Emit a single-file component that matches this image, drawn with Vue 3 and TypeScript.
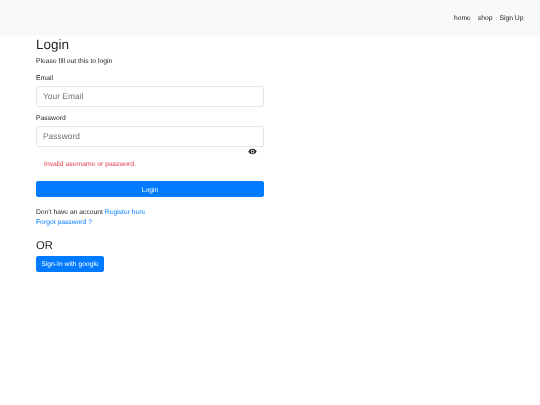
<script setup lang="ts">
const links: string[] = ['home', 'shop', 'Sign Up']
</script>

<template>
  <div class="page">
    <nav class="nav">
      <a v-for="l in links" :key="l" class="nav-link">{{ l }}</a>
    </nav>
    <main class="main">
      <h1 class="title">Login</h1>
      <p class="sub">Please fill out this to login</p>
      <label class="label">Email</label>
      <input class="input" placeholder="Your Email" />
      <label class="label second">Password</label>
      <input class="input" placeholder="Password" />
      <div class="eye-row">
        <svg class="eye" viewBox="0 0 24 24" width="9" height="9">
          <path fill="#212529" d="M12 4.5C7 4.5 2.7 7.6 1 12c1.7 4.4 6 7.5 11 7.5s9.3-3.1 11-7.5c-1.7-4.4-6-7.5-11-7.5zM12 17a5 5 0 1 1 0-10 5 5 0 0 1 0 10zm0-8a3 3 0 1 0 0 6 3 3 0 0 0 0-6z" />
        </svg>
      </div>
      <p class="error">Invalid username or password.</p>
      <button class="btn block">Login</button>
      <p class="account">Don't have an account <a class="link">Register here</a></p>
      <p class="forgot"><a class="link">Forgot password ?</a></p>
      <h2 class="or">OR</h2>
      <button class="btn google">Sign-In with google</button>
    </main>
  </div>
</template>

<style>
html, body { margin: 0; background: #fff; }
</style>

<style scoped>
.page {
  font-family: "Liberation Sans", Arial, sans-serif;
  color: #212529;
  font-size: 6.75px;
  text-rendering: geometricPrecision;
  will-change: opacity;
}
.nav {
  height: 36px;
  background: #f8f9fa;
  display: flex;
  justify-content: flex-end;
  align-items: center;
  gap: 7px;
  padding-right: 16.5px;
  box-sizing: border-box;
}
.nav-link { font-size: 6.75px; color: #212529; }
.main {
  width: 228px;
  margin-left: 36px;
  display: flex;
  flex-direction: column;
  align-items: stretch;
}
.title { margin: 0; font-size: 13.5px; font-weight: 400; line-height: 17px; }
.sub { margin: 4px 0 0; font-size: 6.75px; line-height: 10px; }
.label { margin-top: 7px; font-size: 6.75px; line-height: 10px; height: 12px; }
.second { margin-top: 7px; height: 12px; }
.input {
  height: 21px;
  box-sizing: border-box;
  border: 1px solid #e3e6ea;
  border-radius: 2px;
  padding: 0 6px 1px;
  font-family: inherit;
  font-size: 8.44px;
  color: #495057;
  outline: none;
  background: #fff;
  text-rendering: geometricPrecision;
}
.input::placeholder { color: #6c757d; opacity: 1; }
.eye-row { display: flex; justify-content: flex-end; padding-right: 7px; height: 10px; }
.eye { display: block; }
.error { margin: 3px 0 0 8px; font-size: 6.75px; line-height: 10px; color: #dc3545; }
.btn {
  background: #007bff;
  color: #fff;
  border: 1px solid #007bff;
  border-radius: 2px;
  font-family: inherit;
  font-size: 6.75px;
  padding: 0;
  text-rendering: geometricPrecision;
}
.block { height: 16px; margin-top: 11px; padding-top: 2px; }
.account { margin: 11px 0 0; font-size: 6.75px; line-height: 10px; }
.forgot { margin: 0; font-size: 6.75px; line-height: 10px; }
.link { color: #007bff; }
.or { margin: 10px 0 0; font-size: 11.25px; font-weight: 400; line-height: 17px; }
.google { align-self: flex-start; width: 68px; height: 16px; margin-top: 1px; }
</style>
